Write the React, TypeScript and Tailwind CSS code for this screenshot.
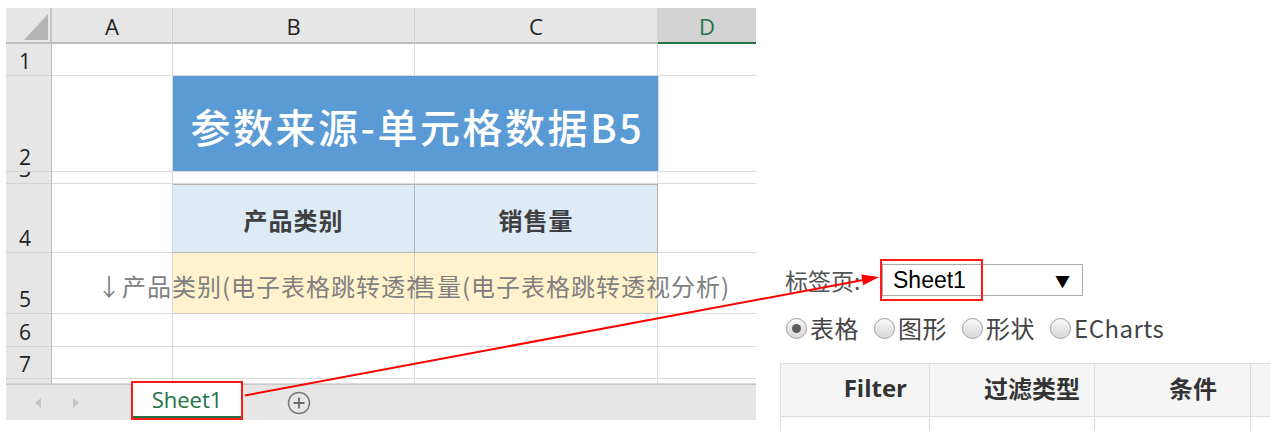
import clsx from "clsx";

const cjk = "font-['Noto_Sans_CJK_SC',sans-serif]";
const ui = "font-['Open_Sans','Noto_Sans_CJK_SC',sans-serif]";

const line = "border-r border-b border-[#dadada]";

function RowHead({ n, h }: { n: string; h: string }) {
  return (
    <div
      className={clsx(
        "w-[46px] shrink-0 overflow-hidden bg-[#e6e6e6] border-r border-r-[#bcbcbc] border-b border-b-[#d2d2d2] flex items-end pl-[13px] pb-[2px] text-[21px] leading-[24px] text-[#222]",
        ui,
        h
      )}
    >
      {n}
    </div>
  );
}

function Radio({ on, label, last }: { on?: boolean; label: string; last?: boolean }) {
  return (
    <div className={clsx("flex items-center", !last && "mr-[15px]")}>
      <div className="w-[21px] h-[21px] rounded-full border border-[#a0a0a0] bg-gradient-to-b from-[#f7f7f7] to-[#d9d9d9] flex items-center justify-center">
        {on && <div className="w-[9px] h-[9px] rounded-full bg-[#5a5a5a]" />}
      </div>
      <span className="ml-[3px] text-[24px] leading-none tracking-[0.5px] text-[#444]">{label}</span>
    </div>
  );
}

export default function App() {
  return (
    <div className={clsx("relative w-[1270px] h-[431px] bg-white flex overflow-hidden", cjk)}>
      {/* spreadsheet */}
      <div className="ml-[6px] mt-[8px] w-[750px] flex flex-col">
        {/* column header */}
        <div className={clsx("flex h-[36px] text-[22px] text-[#222]", ui)}>
          <div className="w-[46px] bg-[#e6e6e6] border-r-2 border-r-[#c4c4c4] border-b-2 border-b-[#bdbdbd] flex items-end justify-end pr-[2px] pb-[2px]">
            <svg width="24" height="26" viewBox="0 0 24 26">
              <polygon points="24,0 24,26 0,26" fill="#b5b5b5" />
            </svg>
          </div>
          {[
            ["A", "w-[121px]"],
            ["B", "w-[242px]"],
            ["C", "w-[243px]"],
          ].map(([l, w]) => (
            <div
              key={l}
              className={clsx(
                "bg-[#e6e6e6] border-r border-r-[#d2d2d2] border-b-2 border-b-[#bdbdbd] flex items-center justify-center pt-[3px]",
                w
              )}
            >
              {l}
            </div>
          ))}
          <div className="w-[98px] bg-[#d3d3d3] border-b-2 border-b-[#217346] flex items-center justify-center pt-[3px] text-[#217346]">
            D
          </div>
        </div>

        {/* row 1 */}
        <div className="flex h-[32px]">
          <RowHead n="1" h="h-[32px]" />
          <div className={clsx("w-[121px]", line)} />
          <div className={clsx("w-[242px]", line)} />
          <div className={clsx("w-[243px]", line)} />
          <div className="w-[98px] border-b border-[#dadada]" />
        </div>

        {/* row 2 title */}
        <div className="flex h-[96px]">
          <RowHead n="2" h="h-[96px]" />
          <div className={clsx("w-[121px]", line)} />
          <div className="w-[485px] bg-[#5b9bd5] border-b border-[#dadada] flex items-center justify-center pt-[4px] pl-[4px] text-[40px] tracking-[2.5px] font-medium text-white whitespace-nowrap">
            参数来源-单元格数据B5
          </div>
          <div className="w-[98px] border-l border-b border-[#dadada]" />
        </div>

        {/* row 3 */}
        <div className="flex h-[12px]">
          <RowHead n="3" h="h-[12px]" />
          <div className={clsx("w-[121px]", line)} />
          <div className={clsx("w-[242px]", line)} />
          <div className={clsx("w-[243px]", line)} />
          <div className="w-[98px] border-b border-[#dadada]" />
        </div>

        {/* row 4 headers */}
        <div className="flex h-[69px]">
          <RowHead n="4" h="h-[69px]" />
          <div className={clsx("w-[121px]", line)} />
          <div className="w-[242px] bg-[#ddebf7] border-t border-r border-b border-[#b4b4b4] flex items-center justify-center pt-[3px] text-[24px] tracking-[1px] font-bold text-[#3f3f3f]">
            产品类别
          </div>
          <div className="w-[243px] bg-[#ddebf7] border-t border-r border-b border-[#b4b4b4] flex items-center justify-center pt-[3px] text-[24px] tracking-[1px] font-bold text-[#3f3f3f]">
            销售量
          </div>
          <div className="w-[98px] border-b border-[#dadada]" />
        </div>

        {/* row 5 data */}
        <div className="flex h-[61px]">
          <RowHead n="5" h="h-[61px]" />
          <div className={clsx("w-[121px]", line)} />
          <div className="w-[242px] bg-[#fff2cc] border-r border-b border-[#cfcfcf] flex items-center justify-center pt-[6px] text-[24px] tracking-[1px] text-[#808080] whitespace-nowrap [clip-path:inset(0_0_0_-300px)]">
            ↓产品类别(电子表格跳转透视分析)
          </div>
          <div className="w-[243px] bg-[#fff2cc] border-r border-b border-[#cfcfcf] flex items-center justify-center pt-[6px] pl-[20px] text-[24px] tracking-[1px] text-[#808080] whitespace-nowrap [clip-path:inset(0_-300px_0_0)]">
            ↓销售量(电子表格跳转透视分析)
          </div>
          <div className="w-[98px] border-b border-[#dadada]" />
        </div>

        {/* rows 6,7,8 */}
        {[
          ["6", "h-[33px]"],
          ["7", "h-[32px]"],
          ["", "h-[5px]"],
        ].map(([n, h]) => (
          <div key={h} className={clsx("flex", h)}>
            <RowHead n={n} h={h} />
            <div className={clsx("w-[121px]", line)} />
            <div className={clsx("w-[242px]", line)} />
            <div className={clsx("w-[243px]", line)} />
            <div className="w-[98px] border-b border-[#dadada]" />
          </div>
        ))}

        {/* sheet tabs */}
        <div className="flex h-[36px] bg-[#e6e6e6] border-t border-[#c8c8c8]">
          <div className="w-[125px] flex items-center pl-[28px] gap-[30px]">
            <svg width="8" height="10" viewBox="0 0 8 10">
              <polygon points="7,0 7,10 1,5" fill="#c4c4c4" />
            </svg>
            <svg width="8" height="10" viewBox="0 0 8 10">
              <polygon points="1,0 1,10 7,5" fill="#c4c4c4" />
            </svg>
          </div>
          <div className="-mt-[4px] h-[39px] w-[112px] border-2 border-[#ff1a1a] bg-white">
            <div className={clsx("h-full border-b-2 border-[#217346] flex items-center justify-center text-[22px] text-[#217346]", ui)}>
              Sheet1
            </div>
          </div>
          <div className="ml-[44px] flex items-center">
            <svg width="24" height="24" viewBox="0 0 24 24">
              <circle cx="12" cy="12" r="10.5" fill="none" stroke="#7a7a7a" strokeWidth="1.5" />
              <path d="M12 6.5v11M6.5 12h11" stroke="#6a6a6a" strokeWidth="1.8" />
            </svg>
          </div>
        </div>
      </div>

      {/* right panel */}
      <div className="ml-[24px] pt-[259px] flex flex-col w-[490px]">
        <div className="shrink-0 flex items-center h-[42px]">
          <span className="w-[102px] pl-[5px] text-[23px] text-[#555]">标签页:</span>
          <div className="relative w-[201px] h-[32px] border border-[#a9a9a9] bg-white flex items-center justify-between pl-[10px] pr-[12px]">
            <span className="font-['Liberation_Sans',sans-serif] text-[23px] text-black leading-none">Sheet1</span>
            <span className="text-[15px] text-black leading-none">▼</span>
            <div className="absolute -left-[3px] -top-[6px] w-[103px] h-[42px] border-2 border-[#ff1a1a]" />
          </div>
        </div>
        <div className="shrink-0 flex items-center h-[54px] pl-[6px]">
          <Radio on label="表格" />
          <Radio label="图形" />
          <Radio label="形状" />
          <Radio label="ECharts" last />
        </div>
        <div className="shrink-0 mt-[8px] flex flex-col text-[24px] font-bold text-[#333]">
          <div className="flex h-[54px] bg-[#f5f5f5] border-t border-b border-l border-[#dcdcdc]">
            <div className={clsx("w-[149px] border-r border-[#dcdcdc] flex items-center justify-end pr-[22px] pb-[4px]", ui)}>
              Filter
            </div>
            <div className="w-[165px] border-r border-[#dcdcdc] flex items-center justify-end pr-[14px] pb-[4px]">
              过滤类型
            </div>
            <div className="w-[156px] border-r border-[#dcdcdc] flex items-center justify-end pr-[33px] pb-[4px]">
              条件
            </div>
            <div className="w-[13px]" />
          </div>
          <div className="flex h-[20px] border-l border-[#dcdcdc]">
            <div className="w-[149px] border-r border-[#dcdcdc]" />
            <div className="w-[165px] border-r border-[#dcdcdc]" />
            <div className="w-[156px] border-r border-[#dcdcdc]" />
          </div>
        </div>
      </div>

      {/* red arrow */}
      <svg className="absolute inset-0 pointer-events-none" width="1270" height="431" viewBox="0 0 1270 431">
        <line x1="245" y1="395.5" x2="866" y2="279.5" stroke="#ff0000" strokeWidth="2" />
        <polygon points="879,277 863.2,285.2 861.4,274.6" fill="#ff0000" />
      </svg>
    </div>
  );
}
